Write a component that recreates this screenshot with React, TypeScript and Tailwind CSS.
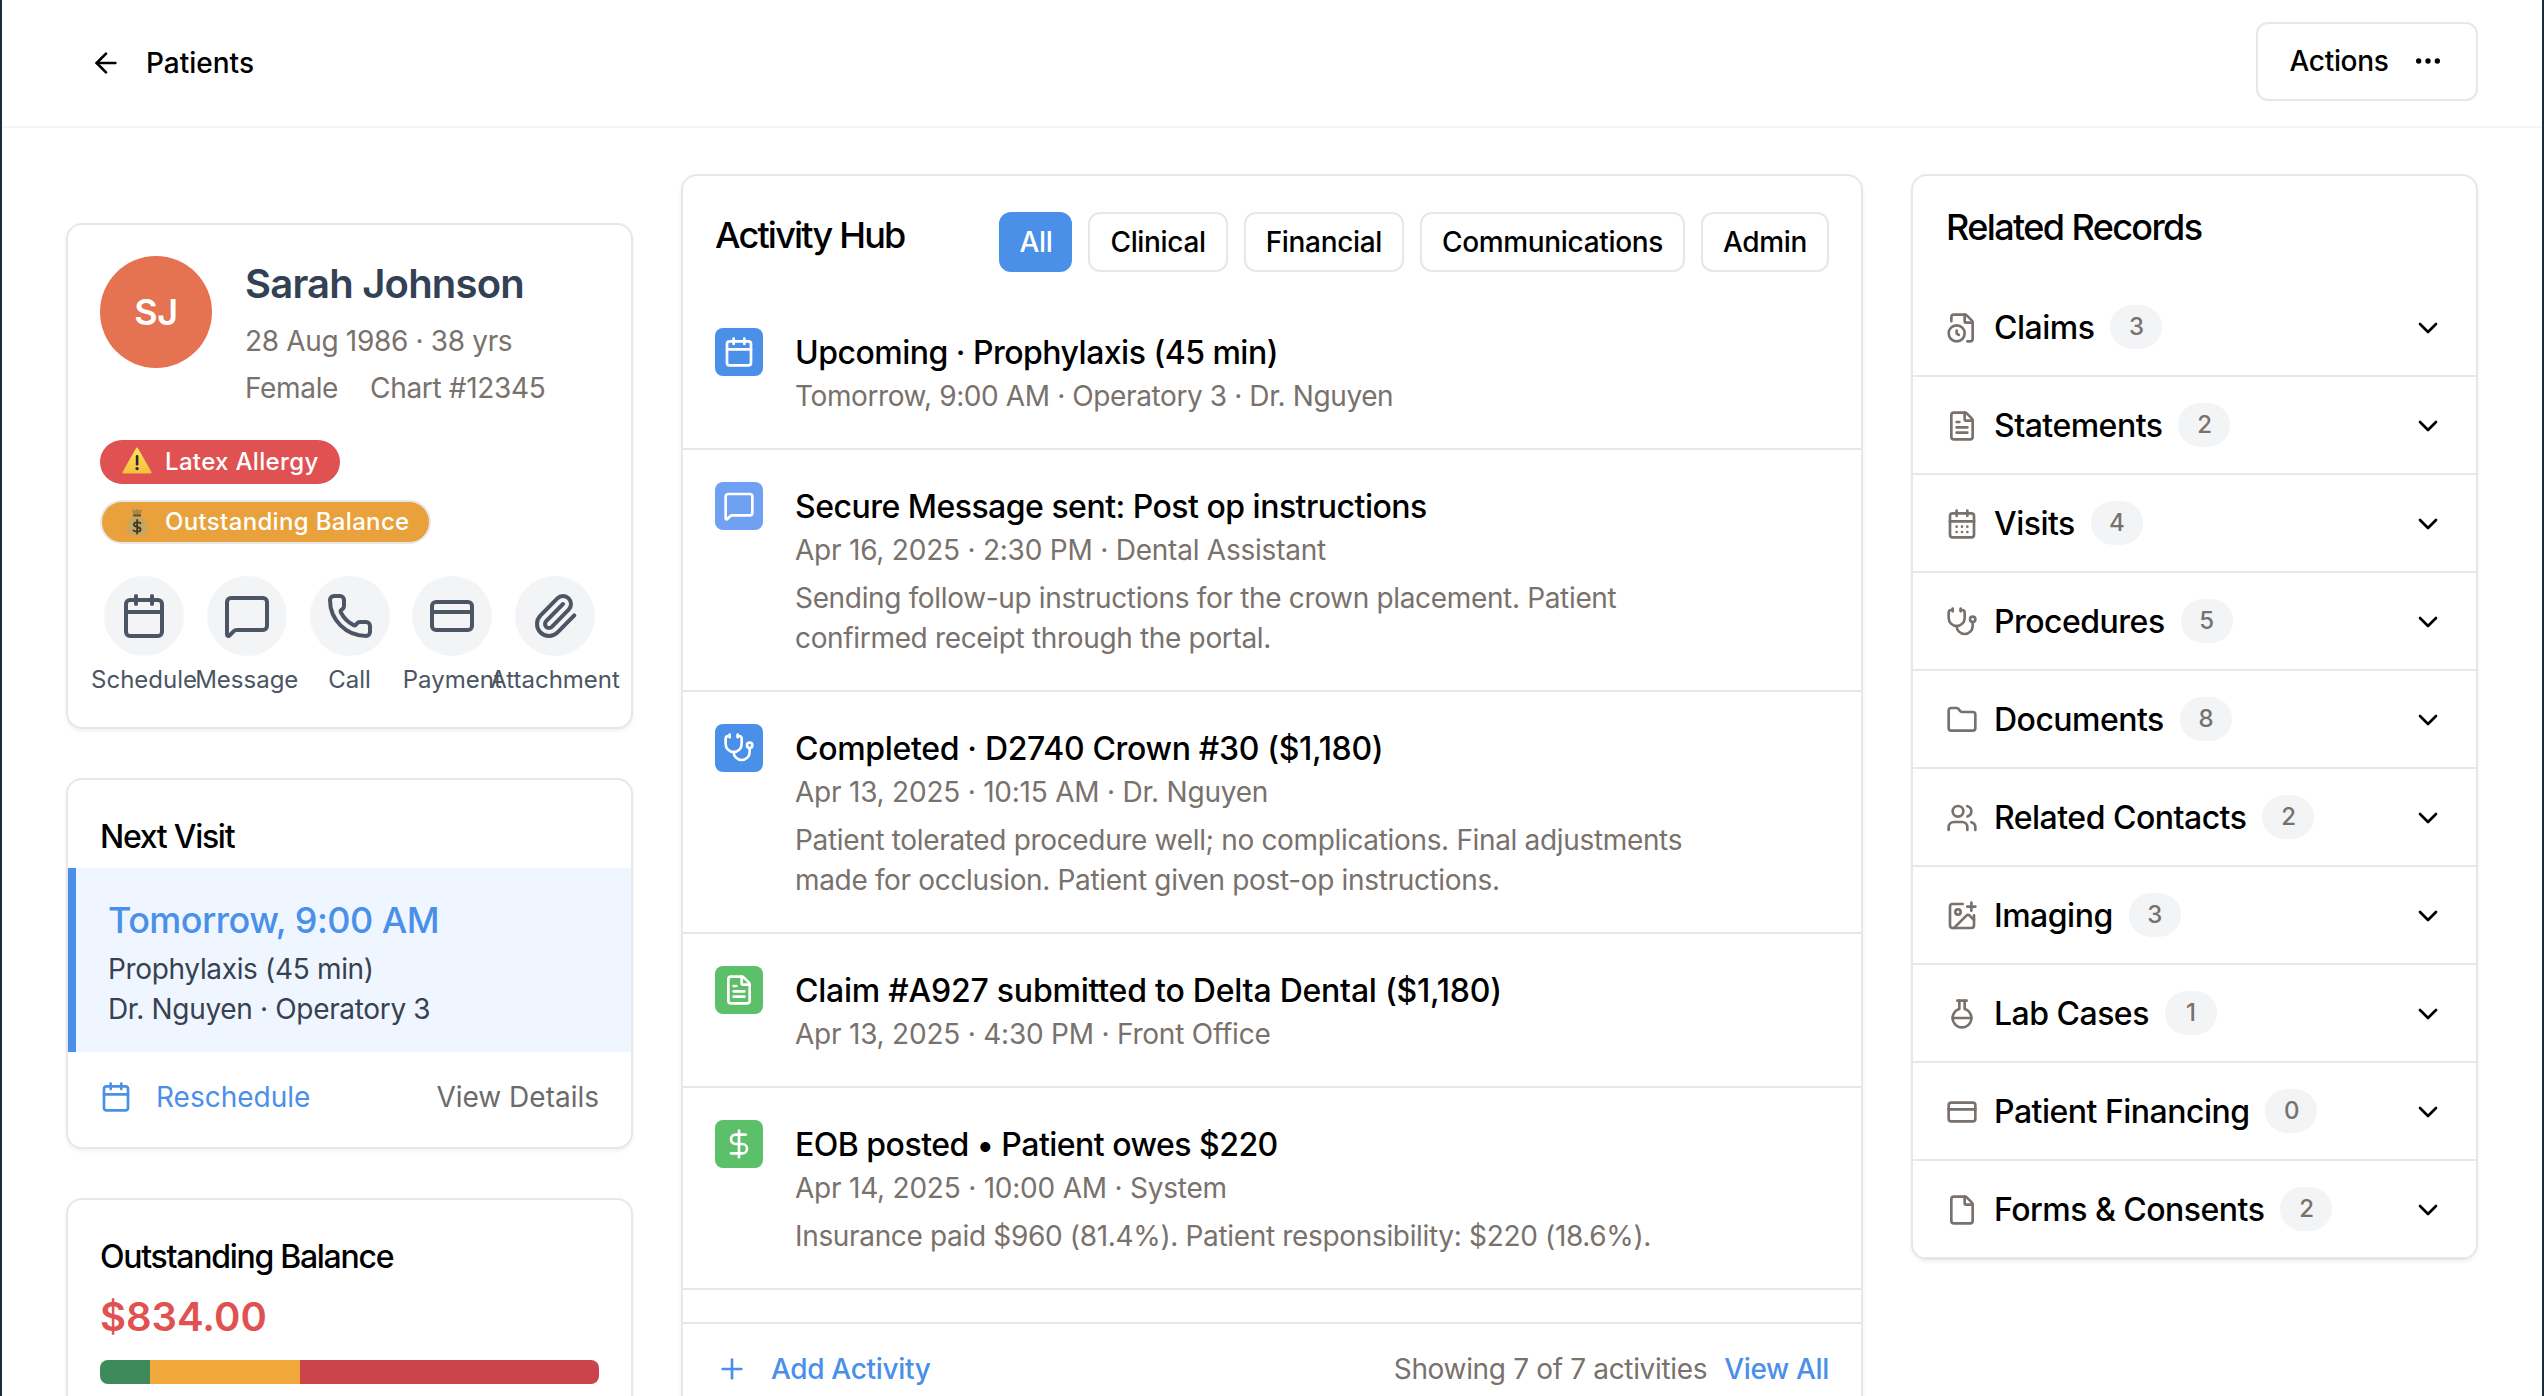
import React from "react";
import { ArrowLeft, Ellipsis, Calendar, MessageSquare, Phone, CreditCard, Paperclip, Stethoscope, FileText, DollarSign, Plus, ChevronDown, FileClock, CalendarDays, Folder, Users, ImagePlus, FlaskRound, File } from "lucide-react";

function Warn() {
  return (
    <svg viewBox="0 0 30 27" className="w-[30px] h-[27px] shrink-0 -mt-[3px]">
      <defs>
        <linearGradient id="warnFill" x1="0" y1="0" x2="0" y2="1">
          <stop offset="0" stopColor="#fde25a" />
          <stop offset="1" stopColor="#f6c23c" />
        </linearGradient>
      </defs>
      <path d="M15 1.5 L28.6 25.5 H1.4 Z" fill="url(#warnFill)" stroke="url(#warnFill)" strokeWidth="2" strokeLinejoin="round" />
      <rect x="13.8" y="8" width="2.6" height="10.5" rx="1.2" fill="#2a2a2a" />
      <circle cx="15.1" cy="21.6" r="1.7" fill="#2a2a2a" />
    </svg>
  );
}
function Bag() {
  return (
    <svg viewBox="0 0 22 28" className="w-[22px] h-[28px] shrink-0">
      <path d="M6 1 L8.5 2.6 L11 1 L13.5 2.6 L16 1 L14.6 7 H7.4 Z" fill="#a98649" />
      <path d="M7.5 8 H14.5 C18.6 11.5 21.5 16.5 21.5 21 C21.5 25.6 17.5 27.5 11 27.5 C4.5 27.5 0.5 25.6 0.5 21 C0.5 16.5 3.4 11.5 7.5 8 Z" fill="#c6a661" />
      <rect x="6.8" y="6.4" width="8.4" height="2.2" rx="1" fill="#6b5428" />
      <path d="M14.6 15.4 C13.4 13.8 7.8 13.6 7.8 16.6 C7.8 19.8 14.6 18.2 14.6 21.4 C14.6 24.2 9 24 7.4 22.4 M11.1 11.8 V25.6" fill="none" stroke="#3f3a26" strokeWidth="1.8" strokeLinecap="round" />
    </svg>
  );
}

const actions = [
  { Icon: Calendar, label: "Schedule" },
  { Icon: MessageSquare, label: "Message" },
  { Icon: Phone, label: "Call" },
  { Icon: CreditCard, label: "Payment" },
  { Icon: Paperclip, label: "Attachment" },
];

const filters = ["All", "Clinical", "Financial", "Communications", "Admin"];

const activities = [
  { Icon: Calendar, bg: "bg-[#4a90e8]", title: "Upcoming · Prophylaxis (45 min)", tt: "tracking-[-0.016em]", meta: "Tomorrow, 9:00 AM · Operatory 3 · Dr. Nguyen", mt: "tracking-[-0.014em]", desc: [] as string[] },
  { Icon: MessageSquare, bg: "bg-[#70a0f2]", title: "Secure Message sent: Post op instructions", tt: "tracking-[-0.016em]", meta: "Apr 16, 2025 · 2:30 PM · Dental Assistant", mt: "tracking-[-0.008em]", desc: ["Sending follow-up instructions for the crown placement. Patient", "confirmed receipt through the portal."] },
  { Icon: Stethoscope, bg: "bg-[#4a90e8]", title: "Completed · D2740 Crown #30 ($1,180)", tt: "tracking-[-0.01em]", meta: "Apr 13, 2025 · 10:15 AM · Dr. Nguyen", mt: "tracking-[-0.008em]", desc: ["Patient tolerated procedure well; no complications. Final adjustments", "made for occlusion. Patient given post-op instructions."] },
  { Icon: FileText, bg: "bg-[#5cbf6a]", title: "Claim #A927 submitted to Delta Dental ($1,180)", tt: "tracking-[-0.007em]", meta: "Apr 13, 2025 · 4:30 PM · Front Office", mt: "tracking-[-0.008em]", desc: [] },
  { Icon: DollarSign, bg: "bg-[#5cbf6a]", title: "EOB posted • Patient owes $220", tt: "tracking-[-0.016em]", meta: "Apr 14, 2025 · 10:00 AM · System", mt: "tracking-[-0.008em]", desc: ["Insurance paid $960 (81.4%). Patient responsibility: $220 (18.6%)."] },
];

const records = [
  { Icon: FileClock, label: "Claims", n: 3 },
  { Icon: FileText, label: "Statements", n: 2 },
  { Icon: CalendarDays, label: "Visits", n: 4 },
  { Icon: Stethoscope, label: "Procedures", n: 5 },
  { Icon: Folder, label: "Documents", n: 8 },
  { Icon: Users, label: "Related Contacts", n: 2 },
  { Icon: ImagePlus, label: "Imaging", n: 3 },
  { Icon: FlaskRound, label: "Lab Cases", n: 1 },
  { Icon: CreditCard, label: "Patient Financing", n: 0 },
  { Icon: File, label: "Forms & Consents", n: 2 },
];

const card = "bg-white border-2 border-[#e7e7e7] rounded-[16px] shadow-[0_2px_4px_rgba(0,0,0,0.06)]";

export default function App() {
  return (
    <div className="h-[1396px] overflow-hidden bg-white border-x-2 border-[#1e293b] text-black font-['Inter','Liberation_Sans',sans-serif] text-[28px] tracking-[-0.012em]">
      <header className="h-[128px] border-b-2 border-[#f5f5f5] pl-[88px] pr-[64px] flex items-center justify-between">
        <div className="flex items-center gap-[24px]">
          <ArrowLeft className="w-[32px] h-[32px]" strokeWidth={2} />
          <span className="text-[28px] font-medium tracking-normal">Patients</span>
        </div>
        <button className="w-[222px] h-[79px] mb-[4px] border-2 border-[#e7e7e7] rounded-[12px] flex items-center justify-center gap-[24px] text-[28px] font-medium">
          Actions
          <Ellipsis className="w-[32px] h-[32px]" strokeWidth={2} />
        </button>
      </header>

      <main className="flex gap-[48px] pl-[64px] pr-[64px] pt-[46px]">
        <div className="w-[567px] shrink-0 pt-[49px] flex flex-col gap-[49px]">
          <section className={`${card} h-[506px] pt-[31px] px-[32px]`}>
            <div className="flex gap-[33px]">
              <div className="w-[112px] h-[112px] rounded-full bg-[#e57352] text-white flex items-center justify-center text-[36px] font-semibold shrink-0">SJ</div>
              <div>
                <div className="text-[40px] leading-[56px] font-semibold text-[#334155] tracking-[-0.02em]">Sarah Johnson</div>
                <div className="text-[#78716c] leading-[48px] mt-[5px]">28 Aug 1986 · 38 yrs</div>
                <div className="text-[#78716c] leading-[48px] -mt-[1px] flex gap-[32px]"><span>Female</span><span>Chart #12345</span></div>
              </div>
            </div>
            <div className="mt-[28px] flex flex-col items-start gap-[16px]">
              <div className="h-[44px] w-[240px] pl-[22px] rounded-full bg-[#e05252] text-white flex items-center gap-[13px] text-[24px] font-medium tracking-[0.014em]">
                <Warn /><span>Latex Allergy</span>
              </div>
              <div className="h-[44px] w-[331px] pl-[24px] rounded-full bg-[#e9a23b] border-2 border-[#e7e7e7] text-white flex items-center gap-[17px] text-[24px] font-medium tracking-[0.014em]">
                <Bag /><span>Outstanding Balance</span>
              </div>
            </div>
            <div className="mt-[32px] px-[4px] flex justify-between">
              {actions.map(({ Icon, label }) => (
                <div key={label} className="w-[80px] flex flex-col items-center">
                  <div className="w-[80px] h-[80px] rounded-full bg-[#f3f4f6] flex items-center justify-center">
                    <Icon className="w-[48px] h-[48px] text-[#4b5563]" strokeWidth={2} />
                  </div>
                  <span className="mt-[8px] text-[24px] leading-[32px] whitespace-nowrap text-[#4b5563] tracking-normal">{label}</span>
                </div>
              ))}
            </div>
          </section>

          <section className={`${card} h-[371px] overflow-hidden`}>
            <div className="h-[88px] pl-[32px] pt-[33px] text-[32px] leading-[48px] font-medium tracking-[-0.04em]">Next Visit</div>
            <div className="h-[184px] border-l-[8px] border-[#4a90e8] bg-[#eff6ff] pl-[32px] pt-[27px]">
              <div className="text-[36px] leading-[50px] font-medium text-[#4a90e8] tracking-[-0.015em]">Tomorrow, 9:00 AM</div>
              <div className="text-[#374151] leading-[40px] mt-[4px]">Prophylaxis (45 min)</div>
              <div className="text-[#374151] leading-[40px]">Dr. Nguyen · Operatory 3</div>
            </div>
            <div className="h-[90px] pl-[32px] pr-[32px] flex items-center justify-between tracking-normal">
              <div className="flex items-center gap-[24px] text-[#4a90e8]">
                <Calendar className="w-[32px] h-[32px]" strokeWidth={2} />
                <span>Reschedule</span>
              </div>
              <span className="text-[#6b6b6b]">View Details</span>
            </div>
          </section>

          <section className={`${card} h-[300px] px-[32px] pt-[33px]`}>
            <div className="text-[32px] leading-[48px] font-medium tracking-[-0.04em]">Outstanding Balance</div>
            <div className="text-[40px] leading-[56px] font-semibold text-[#e05252] mt-[8px] tracking-normal">$834.00</div>
            <div className="mt-[15px] h-[24px] rounded-[8px] overflow-hidden flex">
              <div className="w-[50px] bg-[#3f8a5a]" />
              <div className="w-[150px] bg-[#f2a93b]" />
              <div className="flex-1 bg-[#cc444b]" />
            </div>
          </section>
        </div>

        <section className={`${card} flex-1 min-w-0 h-[1400px]`}>
          <div className="h-[120px] pl-[32px] pr-[32px] pt-[36px] flex items-start justify-between">
            <h2 className="text-[36px] leading-[48px] font-medium tracking-[-0.05em] -mt-[1px]">Activity Hub</h2>
            <div className="flex gap-[16px]">
              {filters.map((f, i) => (
                <button key={f} className={`h-[60px] rounded-[12px] border-2 text-[28px] font-medium ${i === 0 ? "w-[73px] bg-[#4a90e8] border-[#4a90e8] text-white" : "px-[20px] border-[#e7e7e7] text-black"}`}>{f}</button>
              ))}
            </div>
          </div>
          <div>
            {activities.map((a) => (
              <div key={a.title} className="border-b-2 border-[#e7e7e7] py-[32px] px-[32px] flex gap-[32px]">
                <div className={`w-[48px] h-[48px] rounded-[8px] ${a.bg} flex items-center justify-center shrink-0`}>
                  <a.Icon className="w-[32px] h-[32px] text-white" strokeWidth={2} />
                </div>
                <div>
                  <div className={`text-[32px] leading-[50px] font-medium ${a.tt}`}>{a.title}</div>
                  <div className={`leading-[40px] -mt-[2px] text-[#78716c] ${a.mt}`}>{a.meta}</div>
                  {a.desc.length > 0 && (
                    <div className="mt-[8px] leading-[40px] text-[#78716c]">
                      {a.desc.map((d) => (<div key={d}>{d}</div>))}
                    </div>
                  )}
                </div>
              </div>
            ))}
          </div>
          <div className="mt-[32px] border-t-2 border-[#e7e7e7] h-[92px] pl-[33px] pr-[32px] flex items-center justify-between">
            <div className="flex items-center gap-[23px] text-[#4a90e8]">
              <Plus className="w-[32px] h-[32px]" strokeWidth={2} />
              <span className="font-medium">Add Activity</span>
            </div>
            <div className="flex gap-[17px]">
              <span className="text-[#78716c]">Showing 7 of 7 activities</span>
              <span className="text-[#4a90e8] font-medium">View All</span>
            </div>
          </div>
        </section>

        <section className={`${card} w-[567px] shrink-0 h-[1086px] overflow-hidden`}>
          <div className="h-[103px] pl-[33px] pt-[27px] text-[36px] leading-[48px] font-medium tracking-[-0.045em]">Related Records</div>
          {records.map(({ Icon, label, n }) => (
            <div key={label} className="h-[98px] border-b-2 border-[#e7e7e7] pt-[2px] pl-[33px] pr-[32px] flex items-center justify-between">
              <div className="flex items-center">
                <Icon className="w-[32px] h-[32px] text-[#78716c] mr-[16px]" strokeWidth={2} />
                <span className="text-[32px] font-medium tracking-[-0.016em]">{label}</span>
                <span className="ml-[16px] h-[44px] w-[52px] rounded-full bg-[#f3f4f6] text-[#78716c] text-[24px] font-medium flex items-center justify-center -mt-[2px]">{n}</span>
              </div>
              <ChevronDown className="w-[32px] h-[32px]" strokeWidth={2} />
            </div>
          ))}
        </section>
      </main>
    </div>
  );
}
